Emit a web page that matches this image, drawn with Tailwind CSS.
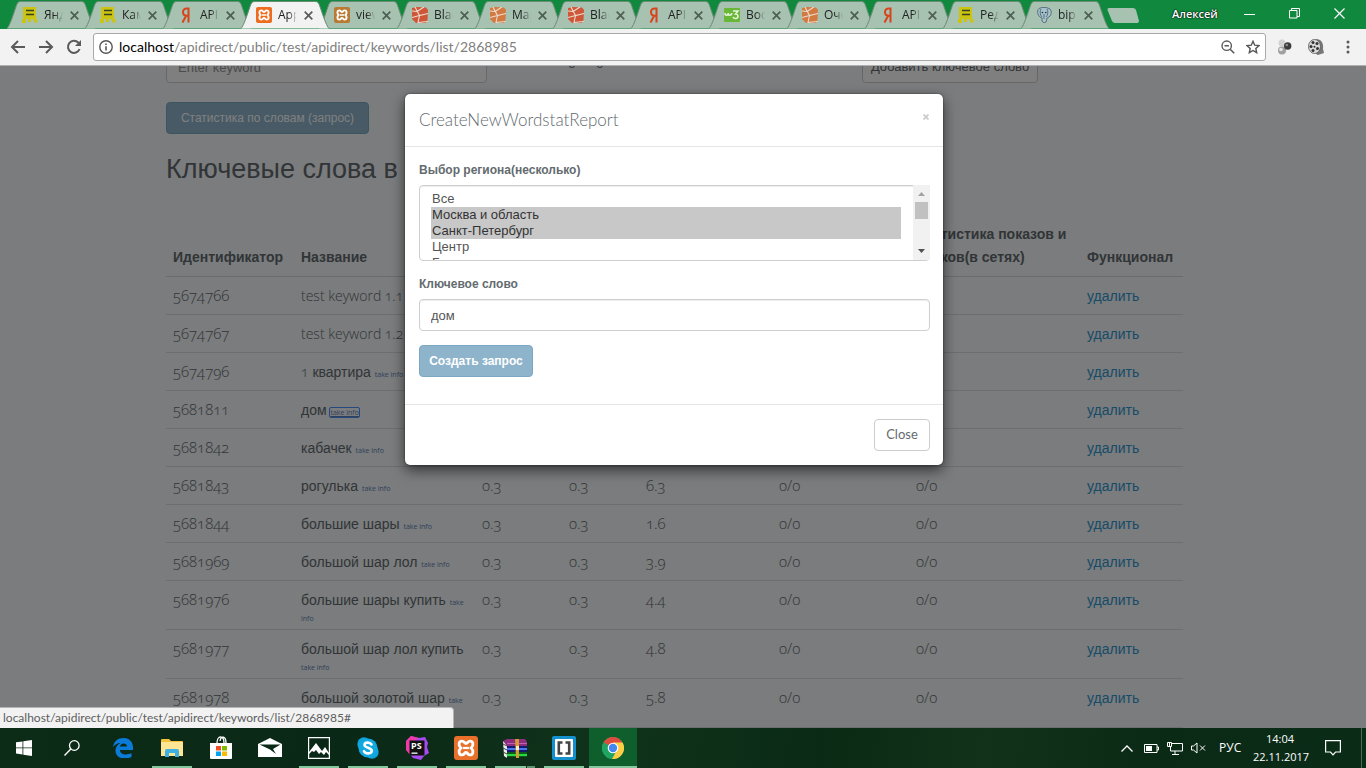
<!DOCTYPE html>
<html lang="ru">
<head>
<meta charset="utf-8">
<title>Ключевые слова</title>
<script src="https://cdn.jsdelivr.net/npm/@tailwindcss/browser@4"></script>
</head>
<body class="h-screen overflow-hidden flex flex-col bg-[#f5f8fa] font-['Open_Sans','Noto_Sans',sans-serif]">

<svg class="hidden" aria-hidden="true">
  <symbol id="direct" viewBox="0 0 16 16"><path fill="#cbc413" d="M1 0h13v10l2 5-3 1-2-4H9v3H6v-3H4v4H0v-4h1z"/><path stroke="#36401f" stroke-width="1.6" d="M4 3.5h8M4 7.5h8"/></symbol>
  <symbol id="ya" viewBox="0 0 16 16"><path fill="none" stroke="#d8431c" stroke-width="2" d="M10.500 0.500v15M10.500 1.400H8.600C6.400 1.400 5 3 5 5s1.400 3.700 3.600 3.700h1.900M8 9l-3.500 6.500"/></symbol>
  <symbol id="xampp" viewBox="0 0 16 16"><rect width="16" height="16" rx="2" fill="currentColor"/><path fill="none" stroke="#fff" stroke-width="1.900" stroke-linejoin="round" d="M5.300 3.400C3.200 3.400 2.600 6.200 4.600 8c-2 1.800-1.400 4.600.7 4.600 1.600 0 1.700-1.600 2.700-1.600s1.100 1.600 2.700 1.600c2.100 0 2.700-2.800.7-4.600 2-1.800 1.400-4.600-.7-4.600C9.100 3.400 9 5 8 5S6.900 3.400 5.300 3.400z"/><path stroke="#fff" stroke-width="1.500" d="M5.800 8h4.400"/></symbol>
  <symbol id="laravel" viewBox="0 0 16 16"><path fill="currentColor" d="M0 1l5-1 9 .5 2 2.500-.5 10L14 16H4l-4-4z"/><path fill="none" stroke="#ecdccd" stroke-width="1.100" d="M3 0l4.500 8.500L16 6.500M7.500 8.500L0 10.500M7.500 8.500L6 15.500l9.500-1M12 0l-7 4.500M0 4l5 .5"/></symbol>
  <symbol id="w3" viewBox="0 0 16 16"><rect y="1" width="16" height="14" rx="1" fill="#69b736"/><path fill="none" stroke="#e9f4df" stroke-width="1.500" d="M1 6c0 3 3 3 3.200 0 .3 3 3.300 3 3.600 0M9 4h5l-2.500 3c3-.3 3.500 4 .5 4.500-1.500.2-2.500-.4-3-1.500"/></symbol>
  <symbol id="pg" viewBox="0 0 16 16"><path fill="#a9c3ce" stroke="#405c69" stroke-width=".8" d="M3 1.500C6 0 10 0 13 1.500c3 1 3 6 0 8.500l-2 1-1 4-2 1-2-2V11C2 10 0 4 3 1.500z"/><path fill="none" stroke="#405c69" stroke-width=".8" d="M5 2c-1.500 2-1 6 1 8M11 2c1.500 2 1 6-1 8M8 7v5"/><circle cx="6.500" cy="5.500" r=".8" fill="#223"/><circle cx="9.800" cy="5.500" r=".8" fill="#223"/></symbol>
  <symbol id="tabx" viewBox="0 0 9 9"><path stroke="currentColor" stroke-width="1.700" d="M.7.7l7.600 7.600M8.300.7L.7 8.300"/></symbol>
  <symbol id="tab" viewBox="0 0 90 28" preserveAspectRatio="none"><path fill="currentColor" stroke="#6c8c77" stroke-width="1" vector-effect="non-scaling-stroke" d="M0 27.500C3 25 8 8 10 3q1-2.500 3-2.500h62q2 0 3 2.500c2 5 7 22 10 24.500"/></symbol>
</svg>

<header class="shrink-0">
  <div class="h-[29px] flex items-start bg-[#10893e] pl-[7px] isolate">
    <nav id="tabs" class="flex-1 max-w-[1092px] flex pt-px" aria-label="Вкладки"></nav>
    <button class="ml-2 mt-2 h-[15px] w-8 shrink-0" aria-label="Новая вкладка"><svg class="w-8 h-[15px]" viewBox="0 0 32 15"><path fill="#a7c2b0" d="M2 0h24q2 0 3 2l3 11q0 2-2 2H8q-2 0-3-2L.5 2Q.2 0 2 0z"/></svg></button>
    <div class="ml-auto flex h-[27px] items-center pr-[21px]">
      <span class="text-[11px] font-semibold leading-4 text-white [text-shadow:0_0_2px_#000,0_0_1px_#000] w-[45px] mr-[27px]">Алексей</span>
      <button aria-label="Свернуть" class="mr-[34px]"><svg class="w-[11px] h-3" viewBox="0 0 11 12"><path stroke="#fff" d="M0 6.500h11"/></svg></button>
      <button aria-label="Свернуть в окно" class="mr-[34px]"><svg class="w-[11px] h-[11px]" viewBox="0 0 11 11"><path fill="none" stroke="#fff" d="M.5 2.500h7.500v7.500H.5zM2.500 2.500v-2h8v8h-2.500"/></svg></button>
      <button aria-label="Закрыть"><svg class="w-[11px] h-[11px]" viewBox="0 0 11 11"><path stroke="#fff" stroke-width="1.200" d="M.5.5l10 10M10.500.5l-10 10"/></svg></button>
    </div>
  </div>
  <div class="h-[37px] flex items-center bg-[#f2f2f2] border-b border-[#b0b0b0] px-[10px]">
    <button aria-label="Назад" class="mr-3"><svg class="w-4 h-4" viewBox="0 0 16 16"><path fill="none" stroke="#5a5a5a" stroke-width="2" d="M15 8H2.500M8 2L2 8l6 6"/></svg></button>
    <button aria-label="Вперёд" class="mr-3"><svg class="w-4 h-4" viewBox="0 0 16 16"><path fill="none" stroke="#5a5a5a" stroke-width="2" d="M1 8h12.500M8 2l6 6-6 6"/></svg></button>
    <button aria-label="Обновить" class="mr-[11px]"><svg class="w-4 h-4" viewBox="0 0 16 16"><path fill="none" stroke="#5a5a5a" stroke-width="2" d="M13.600 10A6 6 0 1 1 12.400 3.800L14 5.500"/><path fill="#5a5a5a" d="M15 1v6H9z"/></svg></button>
    <div class="flex-1 h-[28px] flex items-center rounded-[3px] border border-[#a8a8a8] bg-white px-[5px]">
      <svg class="w-[14px] h-[14px] mr-[6px]" viewBox="0 0 14 14"><circle cx="7" cy="7" r="6.200" fill="none" stroke="#555" stroke-width="1.400"/><path stroke="#555" stroke-width="1.600" d="M7 6.200v4.300M7 3.400v1.600"/></svg>
      <div class="flex-1 text-[14px] leading-5 font-[Lato] text-[#808080]"><span class="text-black">localhost</span>/apidirect/public/test/apidirect/keywords/list/2868985</div>
      <button aria-label="Масштаб" class="mr-[11px]"><svg class="w-[14px] h-[14px]" viewBox="0 0 14 14"><circle cx="5.700" cy="5.700" r="4.700" fill="none" stroke="#5a5a5a" stroke-width="1.400"/><path stroke="#5a5a5a" stroke-width="1.600" d="M9.200 9.200l4 4M3.500 5.700h4.400"/></svg></button>
      <button aria-label="В закладки"><svg class="w-[14px] h-[14px]" viewBox="0 0 14 14"><path fill="none" stroke="#555" stroke-width="1.400" d="M7 1.300l1.700 3.900 4.300.4-3.200 2.900.9 4.200L7 10.500l-3.700 2.200.9-4.200L1 5.600l4.300-.4z"/></svg></button>
    </div>
    <button aria-label="Расширение 1" class="ml-[11px] mr-[15px]"><svg class="w-4 h-4" viewBox="0 0 16 16"><circle cx="5" cy="4" r="3.500" fill="#d2d2d2"/><circle cx="5" cy="11.500" r="4" fill="#a0a0a0"/><circle cx="4" cy="10.500" r="1.800" fill="#e5e5e5"/><circle cx="10.700" cy="7" r="3.700" fill="#3c3c3c"/><circle cx="9.800" cy="6" r="1.300" fill="#8b8b8b"/></svg></button>
    <button aria-label="Расширение 2" class="mr-[22px]"><svg class="w-4 h-4" viewBox="0 0 16 16"><path fill="#777" d="M8 0c5 0 8 4 7 10l1 4-6 2C4 14 8 0 8 0z"/><ellipse cx="6.500" cy="7.500" rx="6" ry="7" fill="#d9d9d9" stroke="#555" stroke-width=".8"/><g fill="#333"><circle cx="5" cy="3.500" r="1.500"/><circle cx="9" cy="4.500" r="1.500"/><circle cx="3" cy="7.500" r="1.500"/><circle cx="6.500" cy="7.700" r="1"/><circle cx="5" cy="11.500" r="1.500"/><circle cx="9.500" cy="9.500" r="1.500"/></g></svg></button>
    <button aria-label="Меню" class="mr-[6px]"><svg class="w-[4px] h-[14px]" viewBox="0 0 4 14" fill="#5a5a5a"><circle cx="2" cy="2" r="1.500"/><circle cx="2" cy="7" r="1.500"/><circle cx="2" cy="12" r="1.500"/></svg></button>
  </div>
</header>

<main class="relative flex-1 min-h-0 overflow-hidden pr-[17px] font-['Liberation_Sans',sans-serif] text-[#636b6f]">
  <div class="max-w-[1017px] mx-auto -mt-[15px]">
    <form class="flex items-start">
      <input type="text" aria-label="Ключевое слово" placeholder="Enter keyword" class="w-[321px] h-8 rounded-[4px] border border-[#ccd0d2] bg-white px-[11px] text-[13px] placeholder:text-[#999] mr-[66px]">
      <span class="w-[309px] text-[13px] leading-4 pt-[2px]">targeting</span>
      <button type="button" class="h-8 w-[176px] rounded-[4px] border border-[#ccc] bg-white text-[13px] whitespace-nowrap">Добавить ключевое слово</button>
    </form>
    <button class="mt-[19px] h-8 w-[203px] rounded-[4px] border border-[#7da8c3] bg-[#8eb4cb] text-[12px] text-white whitespace-nowrap">Статистика по словам (запрос)</button>
    <h1 class="mt-[15px] h-[74px] text-[27px] leading-10">Ключевые слова в</h1>
    <table class="w-full table-fixed border-collapse text-[14px] leading-4">
      <colgroup><col class="w-[128px]"><col class="w-[181px]"><col class="w-[87px]"><col class="w-[77px]"><col class="w-[133px]"><col class="w-[137px]"><col class="w-[171px]"><col class="w-[103px]"></colgroup>
      <thead>
        <tr class="text-left align-bottom leading-[23px] border-b border-[#d4d7d9] whitespace-nowrap">
          <th class="px-[7px] pb-[7px]">Идентификатор</th><th class="px-[7px] pb-[7px]">Название</th><th></th><th></th><th></th><th></th><th class="px-[7px] pb-[7px]">Статистика показов и<br>кликов(в сетях)</th><th class="px-[7px] pb-[7px]">Функционал</th>
        </tr>
      </thead>
      <tbody id="rows"></tbody>
    </table>
  </div>

  <div class="absolute inset-0 bg-black/50 flex justify-center items-start pt-7 pr-[18px]">
    <section role="dialog" aria-labelledby="dlg" class="w-[538px] rounded-[5px] bg-white shadow-[0_5px_14px_rgba(0,0,0,0.6),0_0_2px_rgba(0,0,0,0.6)]">
      <div class="h-[53px] border-b border-[#e5e5e5] pl-[14px] pr-[13px] pt-[14px] flex justify-between items-start">
        <h4 id="dlg" class="font-[Lato] font-light text-[17px] leading-6">CreateNewWordstatReport</h4>
        <button aria-label="Закрыть окно" class="h-[18px] flex items-center pr-px"><svg class="w-[6px] h-[6px]" viewBox="0 0 6 6"><path stroke="#ccc" stroke-width="1.800" d="M.5.5l5 5M5.500.5l-5 5"/></svg></button>
      </div>
      <form class="pl-[14px] pr-[13px] pt-[13px] pb-[27px] border-b border-[#e5e5e5] text-[13px]">
        <label for="reg" class="block text-[12px] font-bold leading-5 mb-[5px]">Выбор региона(несколько)</label>
        <div class="relative">
          <select id="reg" multiple class="block w-full h-[76px] rounded-[4px] border border-[#ccd0d2] bg-white pt-[5px] pl-[11px] pr-[28px] text-[#555] [scrollbar-width:none] shadow-[inset_0_1px_1px_rgba(0,0,0,0.075)]">
            <option class="h-4 min-h-0 px-px py-0 leading-4">Все</option>
            <option selected class="h-4 min-h-0 px-px py-0 leading-4 checked:bg-[#c8c8c8] checked:text-[#333]">Москва и область</option>
            <option selected class="h-4 min-h-0 px-px py-0 leading-4 checked:bg-[#c8c8c8] checked:text-[#333]">Санкт-Петербург</option>
            <option class="h-4 min-h-0 px-px py-0 leading-4">Центр</option>
            <option class="h-4 min-h-0 px-px py-0 leading-4">Белгород</option>
          </select>
          <div aria-hidden="true" class="absolute right-0 top-0 h-[75px] w-[17px] bg-[#f1f1f1] flex flex-col items-center rounded-br-[3px]">
            <svg class="w-[7px] h-[4px] mt-[7px] mb-[6px]" viewBox="0 0 7 4"><path fill="#a3a3a3" d="M0 4l3.500-4L7 4z"/></svg>
            <div class="w-[13px] h-[17px] bg-[#c1c1c1]"></div>
            <svg class="w-[7px] h-[4px] mt-auto mb-[7px]" viewBox="0 0 7 4"><path fill="#505050" d="M0 0l3.500 4L7 0z"/></svg>
          </div>
        </div>
        <label for="kw" class="block text-[12px] font-bold leading-5 mt-[13px] mb-[5px]">Ключевое слово</label>
        <input id="kw" type="text" value="дом" class="block w-full h-8 rounded-[4px] border border-[#ccd0d2] px-[11px] text-[#555] shadow-[inset_0_1px_1px_rgba(0,0,0,0.075)]">
        <button type="button" class="mt-[14px] block h-8 w-[114px] rounded-[4px] border border-[#7da8c3] bg-[#8eb4cb] text-[12px] font-bold text-white whitespace-nowrap">Создать запрос</button>
      </form>
      <div class="py-[14px] pr-[13px] flex justify-end">
        <button class="h-8 w-[56px] rounded-[4px] border border-[#ccc] font-[Lato] text-[13px]">Close</button>
      </div>
    </section>
  </div>

  <div class="absolute left-0 bottom-0 w-[454px] h-[21px] pl-[3px] bg-[#f2f2f2] border-t border-r border-[#b5b5b5] rounded-tr-[4px] font-[Lato] text-[12px] leading-5 text-[#5e5e5e] whitespace-nowrap">localhost/apidirect/public/test/apidirect/keywords/list/2868985#</div>
</main>

<footer class="shrink-0 h-10 flex text-white bg-[linear-gradient(100deg,#0c2c17_0%,#0a2816_25%,#10331b_45%,#0a2a15_60%,#123219_72%,#0b2a16_85%,#0a2c17_100%)]">
  <div class="flex">
    <button aria-label="Пуск" class="w-12 h-10 flex items-center justify-center"><svg class="w-4 h-4" viewBox="0 0 16 16" fill="#fff"><path d="M0 2.300L6.500 1.400v6.100H0zM7.300 1.300L16 0v7.500H7.300zM0 8.300h6.500v6.200L0 13.600zM7.300 8.300H16V16l-8.700-1.300z"/></svg></button>
    <button aria-label="Поиск" class="w-12 h-10 flex items-center justify-center"><svg class="w-4 h-4" viewBox="0 0 16 16"><circle cx="10.300" cy="5.500" r="4.800" fill="none" stroke="#fff" stroke-width="1.300"/><path stroke="#fff" stroke-width="1.400" d="M6.800 9L.5 15.500"/></svg></button>
    <div class="flex gap-px pl-[3px]">
      <button aria-label="Edge" class="w-12 h-10 flex items-center justify-center"><svg class="w-5 h-5" viewBox="0 0 20 20"><path fill="#0a7bd8" d="M0 9C1 3 5 0 10.500 0 17 0 20 4.500 20 9.500V12H7c0 5 7 5.500 11.500 3v4C11 22.500 2.500 20 2.500 12.500 2.500 9 4.500 6.500 7.500 5 4.500 5 1.500 7 0 9zm7-.500h7c0-4-6.500-4-7 0z"/></svg></button>
      <button aria-label="Проводник" class="w-12 h-10 flex items-center justify-center relative"><svg class="w-[22px] h-[18px]" viewBox="0 0 22 18"><path fill="#f3c33e" d="M0 1q0-1 1-1h7l2 2h11q1 0 1 1v14H0z"/><path fill="#ffe694" d="M0 3h22v14H0z"/><path fill="#3fb0e3" d="M4 18v-6q0-2 2-2h10q2 0 2 2v6h-4v-4H8v4z"/></svg><i class="absolute bottom-0 inset-x-1 h-[2px] bg-[#83c79d]"></i></button>
      <button aria-label="Магазин" class="w-12 h-10 flex items-center justify-center"><svg class="w-[24px] h-[24px]" viewBox="0 0 24 24"><path fill="none" stroke="#fff" stroke-width="1.300" d="M8 7c0-8 7-8 7 0M11 5c1-6 6-5 6 2"/><path fill="#fff" d="M1 7h22v15q0 1-1 1H2q-1 0-1-1z"/><path fill="#f04e23" d="M7 10h5v4.500H7z"/><path fill="#7fba00" d="M13 10h5v4.500h-5z"/><path fill="#00a4ef" d="M7 15.500h5V20H7z"/><path fill="#ffb900" d="M13 15.500h5V20h-5z"/></svg></button>
      <button aria-label="Почта" class="w-12 h-10 flex items-center justify-center"><svg class="w-6 h-5" viewBox="0 0 24 20"><path fill="#fff" d="M0 6L12 0l12 6v13H0z"/><path fill="#0b2a16" d="M1.500 6.500h21L15 11l3 5-6-4.500z"/></svg></button>
      <button aria-label="Фотографии" class="w-12 h-10 flex items-center justify-center relative"><svg class="w-[22px] h-[22px]" viewBox="0 0 22 22"><path fill="none" stroke="#fff" stroke-width="1.200" d="M.6.6h20.800v20.800H.6z"/><path fill="#fff" d="M1 15l7-9 6 8 3-4 4 6v2l-3-3-2 3-3-3-2 2-3-4-2 2-2-1-3 3z"/></svg><i class="absolute bottom-0 inset-x-1 h-[2px] bg-[#83c79d]"></i></button>
      <button aria-label="Skype" class="w-12 h-10 flex items-center justify-center relative"><svg class="w-[22px] h-[22px]" viewBox="0 0 22 22"><circle cx="7" cy="7" r="6.700" fill="#0ea4dc"/><circle cx="15" cy="15" r="6.700" fill="#0ea4dc"/><circle cx="11" cy="11" r="9.500" fill="#12a8e0"/><path fill="none" stroke="#fff" stroke-width="2.600" stroke-linecap="round" d="M14.500 7.500C13 4.800 7.500 5 7.500 8s7.300 2.500 7.300 5.800c0 3.200-6.300 3.500-7.800.4"/></svg><i class="absolute bottom-0 inset-x-1 h-[2px] bg-[#83c79d]"></i></button>
      <button aria-label="PhpStorm" class="w-12 h-10 flex items-center justify-center relative"><svg class="w-6 h-6" viewBox="0 0 24 24"><path fill="#a74bf0" d="M1 5l5-5 8 2 6-1 3 6-1 4 2 6-5 3-3 4-8-2-5-6z"/><path fill="#ef3aa8" d="M1 5l5-5 8 2-9 5v12l-4-5z"/><path fill="#111" d="M4.500 4.500h15v15h-15z"/><path fill="#fff" d="M6.500 16.500h6v1.300h-6z"/><text x="6" y="12.500" fill="#fff" font-family="Open Sans" font-weight="700" font-size="9">PS</text></svg><i class="absolute bottom-0 inset-x-1 h-[2px] bg-[#83c79d]"></i></button>
      <button aria-label="XAMPP" class="w-12 h-10 flex items-center justify-center relative text-[#e8702a]"><svg class="w-6 h-6"><use href="#xampp"/></svg><i class="absolute bottom-0 inset-x-1 h-[2px] bg-[#83c79d]"></i></button>
      <button aria-label="WinRAR" class="w-12 h-10 flex items-center justify-center relative"><svg class="w-6 h-[19px]" viewBox="0 0 24 19"><path fill="#eee" d="M0 2l4 2v15l-3-2z"/><path stroke="#444" d="M0 5l4 2M0 9l4 2M0 13l4 2"/><path fill="#8d2f7e" d="M0 2l4-2h18l2 3v4H4z"/><path fill="#c45fb4" d="M4 4h20v1H4z"/><path fill="#151a6e" d="M4 7h20v6H4z"/><path fill="#4a77f5" d="M4 9h20v2H4z"/><path fill="#0a5a1a" d="M4 13h20v5H4z"/><path fill="#28d840" d="M4 15h20v2H4z"/><path fill="#d69a30" d="M12 0h4v19h-3z"/><path fill="#fff0b0" d="M13 7h3v4h-3z"/></svg><i class="absolute bottom-0 left-1 right-[13px] h-[2px] bg-[#83c79d]"></i><i class="absolute bottom-0 right-1 w-2 h-[2px] bg-[#5e9472]"></i></button>
      <button aria-label="Brackets" class="w-12 h-10 flex items-center justify-center relative"><svg class="w-6 h-6" viewBox="0 0 24 24"><rect width="24" height="24" rx="2" fill="#1590cf"/><rect x="3" y="3" width="18" height="18" rx="1" fill="#fff"/><path fill="none" stroke="#444" stroke-width="2.600" d="M10.500 6.500H6.800v11h3.700M13.500 6.500h3.700v11h-3.700"/></svg><i class="absolute bottom-0 inset-x-1 h-[2px] bg-[#83c79d]"></i></button>
      <button aria-label="Chrome" class="w-12 h-10 flex items-center justify-center relative bg-[#0f5f2d]"><svg class="w-[22px] h-[22px]" viewBox="0 0 22 22"><circle cx="11" cy="11" r="11" fill="#1fa463"/><path fill="#dd4b3e" d="M11 11L1.500 5.500a11 11 0 0 1 19 0z"/><path fill="#fdcd46" d="M11 11l-1 11a11 11 0 0 0 10.500-16.500H11z"/><path fill="#1fa463" d="M1.500 5.500A11 11 0 0 0 10 22l5-9z"/><circle cx="11" cy="11" r="5.300" fill="#fff"/><circle cx="11" cy="11" r="4.200" fill="#4387f3"/></svg><i class="absolute bottom-0 inset-x-0 h-[2px] bg-[#83c79d]"></i></button>
    </div>
  </div>
  <div class="ml-auto flex items-center">
    <button aria-label="Скрытые значки" class="mr-[11px]"><svg class="w-3 h-[7px]" viewBox="0 0 12 7"><path fill="none" stroke="#fff" stroke-width="1.300" d="M.5 6.500L6 1l5.500 5.500"/></svg></button>
    <svg class="w-[15px] h-[9px] mr-2" viewBox="0 0 15 9"><path fill="none" stroke="#fff" d="M.5.5h12.500v8H.5zM13 3h1.500v3H13"/><path fill="#fff" d="M2 2h6v5H2z"/></svg>
    <svg class="w-4 h-[13px] mr-[8px]" viewBox="0 0 16 13"><path fill="none" stroke="#fff" d="M5 1.500h10.500v7.500H3.500V5M8 9v3M5 12.500h7M.5.500h4v4h-4zM2.500 1v3"/></svg>
    <svg class="w-[15px] h-3 mr-[13px]" viewBox="0 0 15 12"><path fill="none" stroke="#fff" d="M.5 4v4h2L6 11V1L2.500 4zM9 3.500l5 5M14 3.500l-5 5"/></svg>
    <span class="text-[12px] leading-4 w-[22px] mr-3">РУС</span>
    <div class="text-[11px] leading-[18px] text-center w-[54px] mr-[18px] whitespace-nowrap">14:04<br>22.11.2017</div>
    <button aria-label="Уведомления" class="mr-5"><svg class="w-4 h-4" viewBox="0 0 16 16"><path fill="none" stroke="#fff" stroke-width="1.200" d="M.6.6h14.800v11.400H10.500L8 14.800 5.500 12H.6z"/></svg></button>
    <div class="h-10 w-[5px] border-l border-[#4f6b58]"></div>
  </div>
</footer>

<script>
const tabs = [['direct','Яндекс'],['direct','Кампания'],['ya','API'],['xampp','App'],['xampp','view'],['laravel','Blade'],['laravel','Маршруты'],['laravel','Blade'],['ya','API'],['w3','Восемь'],['laravel','Очереди'],['ya','API'],['direct','Редактор'],['pg','bip']];
const tint = ['','','','text-[#ee6c1f]','text-[#b97a33]','text-[#cf5638]','text-[#d27a42]','text-[#cf5638]','','','text-[#d27a42]','','',''];
document.getElementById('tabs').innerHTML = tabs.map(([icon, title], i) => {
  const on = i === 3;
  return `<a href="#" class="relative flex-1 min-w-0 h-7 flex items-center pl-[15px] ${on ? 'z-20' : 'z-10'}">
    <svg class="absolute left-0 top-0 w-[calc(100%+12px)] h-7 ${on ? 'text-[#f2f2f2]' : 'text-[#a7c2b0]'}"><use href="#tab"/></svg>
    <svg class="relative w-4 h-4 shrink-0 ${tint[i]}"><use href="#${icon}"/></svg>
    <span class="relative ml-[6px] w-[19px] shrink-0 overflow-hidden whitespace-nowrap text-[12px] leading-5 text-[#222] [mask-image:linear-gradient(to_right,#000_55%,transparent)]">${title}</span>
    <svg class="relative ml-[7px] w-[9px] h-[9px] shrink-0 ${on ? 'text-[#5a5a5a]' : 'text-[#4d5f53]'}"><use href="#tabx"/></svg>
  </a>`;
}).join('');

const rows = [['5674766','test keyword 1.1'],['5674767','test keyword 1.2'],['5674796','1 квартира'],['5681811','дом'],['5681842','кабачек'],
  ['5681843','рогулька','6.3'],['5681844','большие шары','1.6'],['5681969','большой шар лол','3.9'],['5681976','большие шары купить','4.4'],['5681977','большой шар лол купить','4.8'],['5681978','большой золотой шар','5.8']];
const num = "px-[7px] pt-[10px] font-['Open_Sans'] font-light text-[15px] leading-4 oldstyle-nums";
document.getElementById('rows').innerHTML = rows.map(([id, name, price], i) => {
  const title = name.replace(/[a-z0-9.]+( [a-z0-9.]+)*/, m => `<span class="font-['Open_Sans'] font-light leading-none oldstyle-nums">${m}</span>`);
  const link = i < 2 ? '' : ` <a href="#" class="font-['Open_Sans'] text-[7px] leading-none text-[#5f83b5] ${i === 3 ? 'underline outline-1 outline-[#4d90fe] rounded-[1px]' : ''}">take info</a>`;
  const vals = price ? ['0.3','0.3',price,'0/0','0/0'] : ['','','','',''];
  return `<tr class="h-[38px] align-top border-b border-[#ddd]">
    <td class="${num}">${id}</td>
    <td class="px-[7px] pt-[11px] pb-[5px]">${title}${link}</td>
    ${vals.map(v => `<td class="${num}">${v}</td>`).join('')}
    <td class="px-[7px] pt-[11px]"><a href="#" class="text-[#3097d1]">удалить</a></td>
  </tr>`;
}).join('');
</script>
</body>
</html>
